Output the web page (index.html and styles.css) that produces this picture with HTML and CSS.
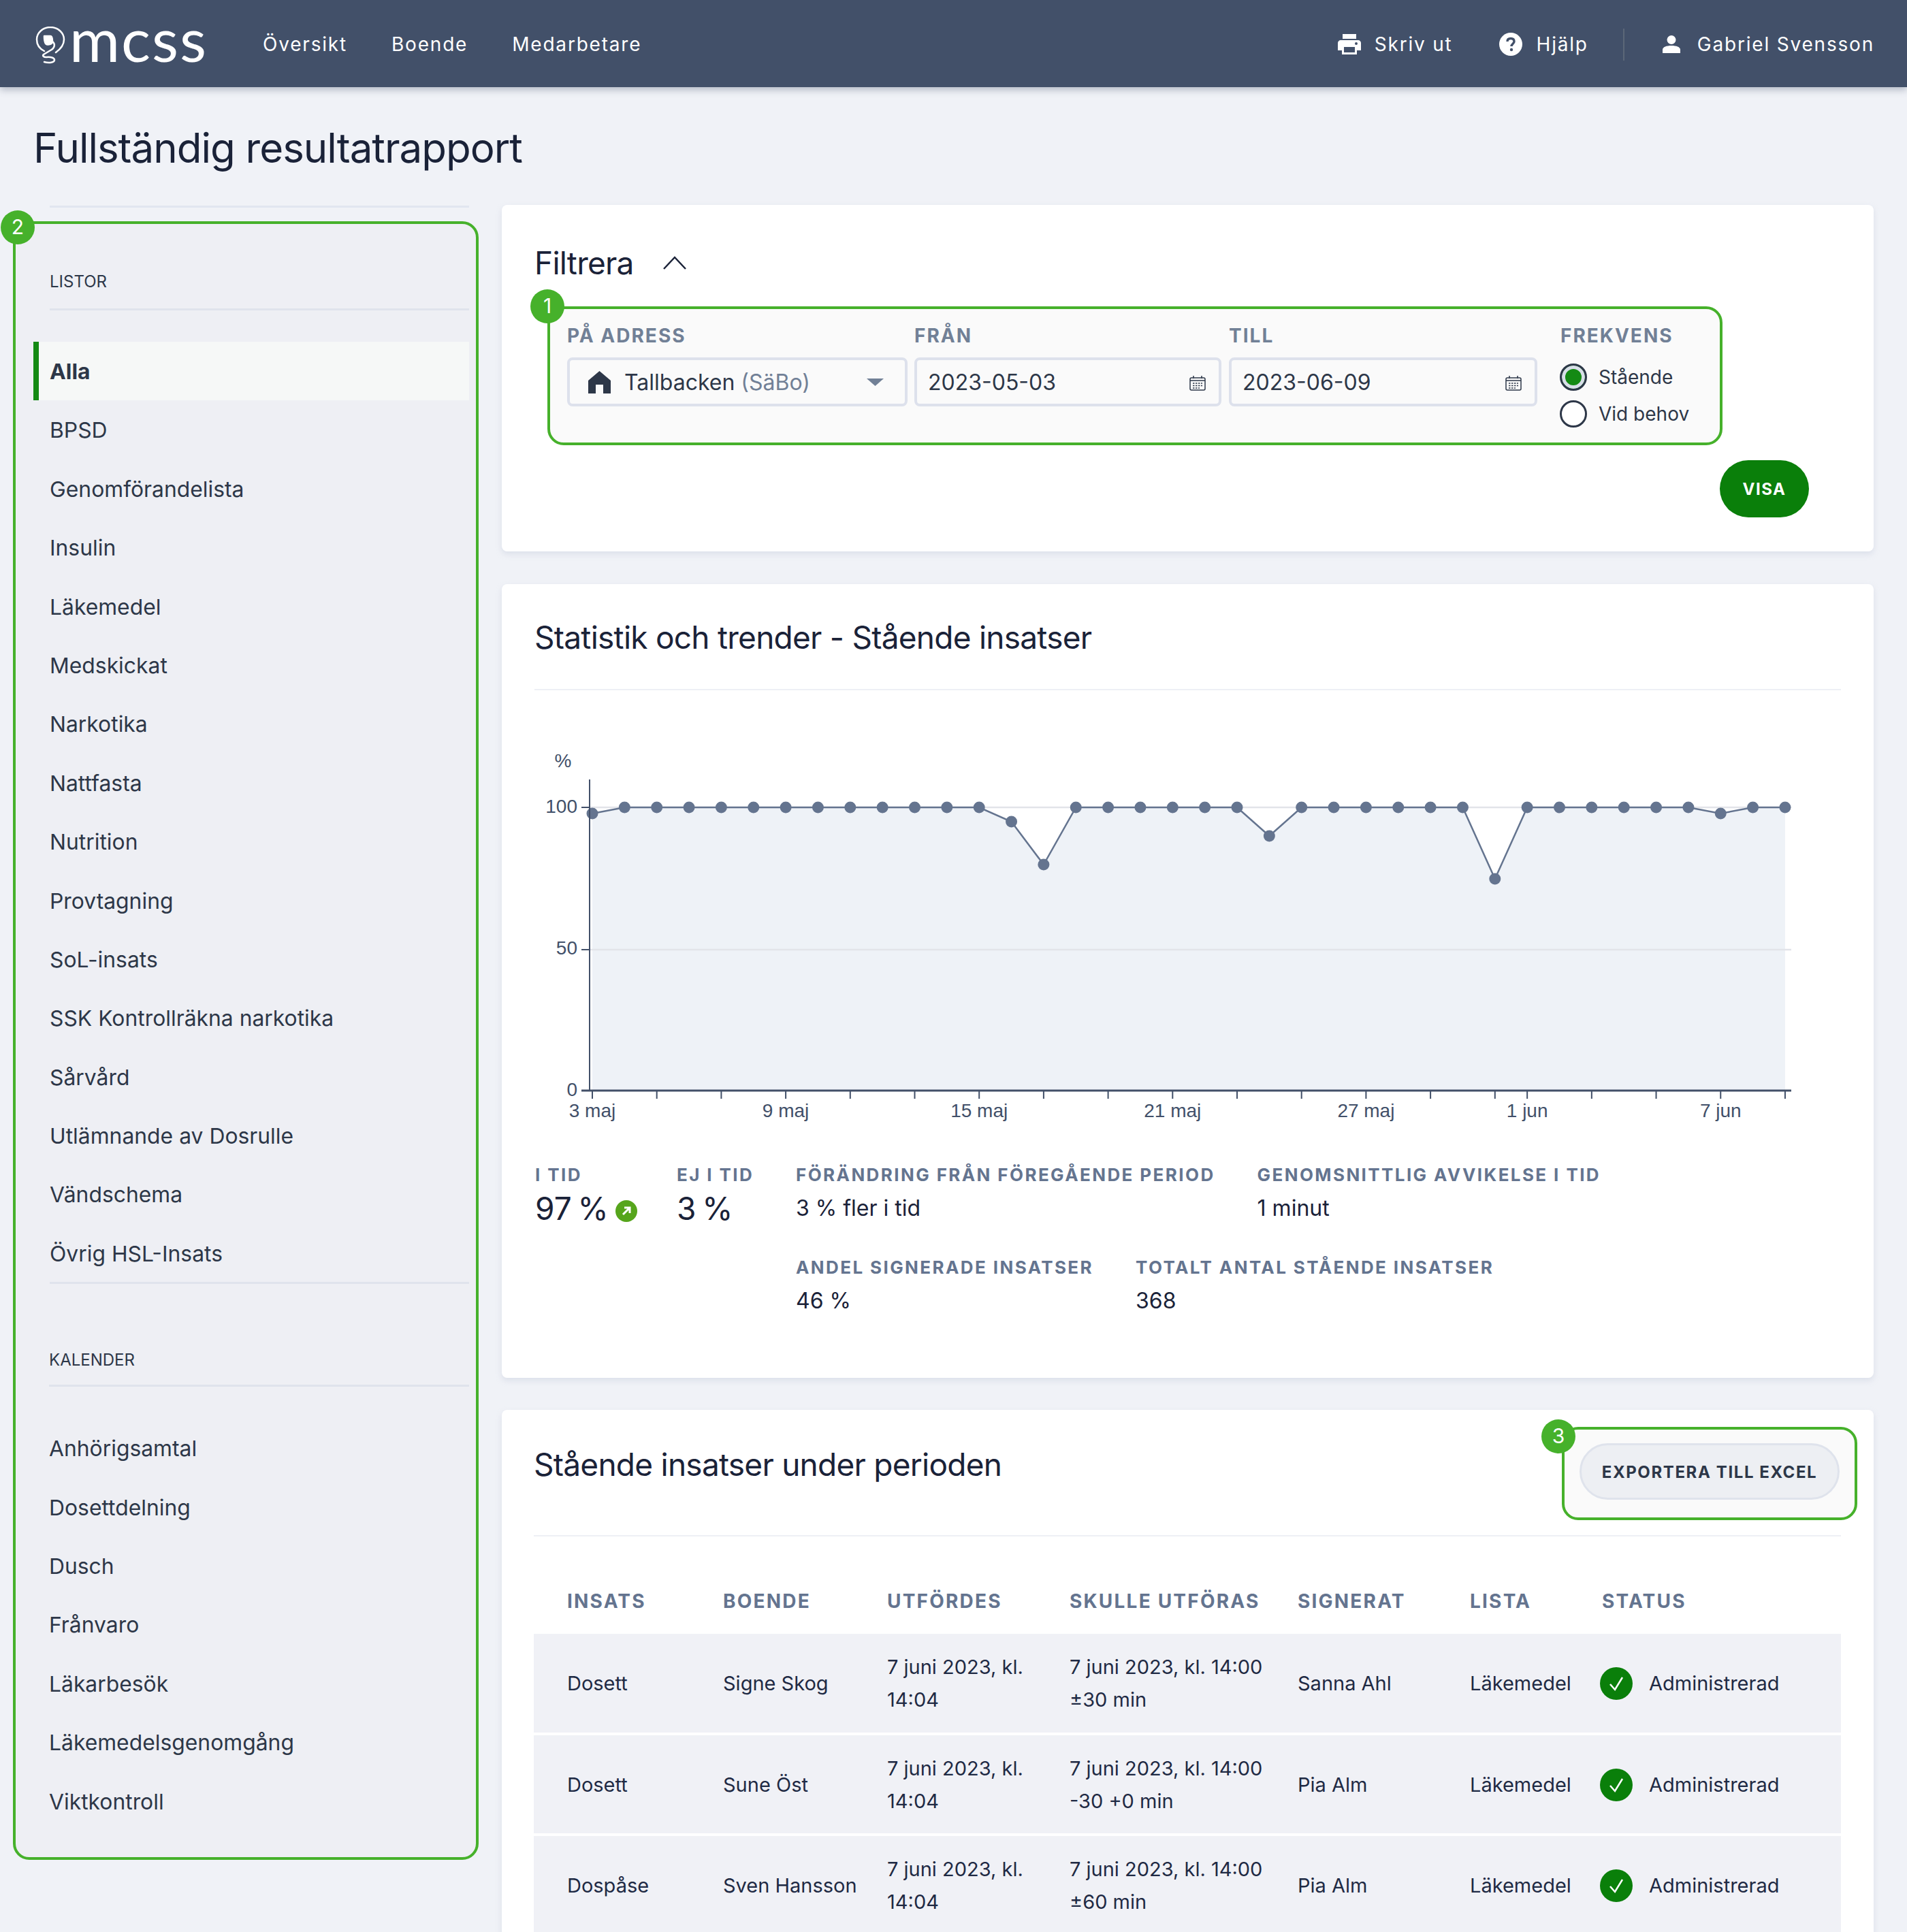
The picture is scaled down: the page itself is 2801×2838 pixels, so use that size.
FILE: index.html
```html
<!DOCTYPE html>
<html lang="sv">
<head>
<meta charset="utf-8">
<title>Fullständig resultatrapport</title>
<link rel="stylesheet" href="styles.css">
</head>
<body>
<div class="page">
  <header class="topbar">
    <a class="logo">
      <svg class="logo-mark" viewBox="0 0 44 56" fill="none" stroke="#fff" stroke-width="2.500" stroke-linecap="round" stroke-linejoin="round">
        <path d="M13 36C5 32 2 25 2 19C2 9 11 1 22 1C33 1 42 9 42 19C42 27 37 33 30 38"/>
        <path fill="#fff" d="M13 14H22C25 14 25 20 25 22C25 26 18 28 15 25C13 22 13 18 13 14Z"/>
        <path d="M25 22C30 26 28 32 22 35L12 41C10 43 12 45 16 45C22 44 28 46 28 49C28 53 20 54 13 52"/>
      </svg>
      <span class="logo-text">mcss</span>
    </a>
    <nav class="nav">
      <a>Översikt</a>
      <a>Boende</a>
      <a>Medarbetare</a>
    </nav>
    <div class="tools">
      <a class="tool tool-print">
        <svg class="ico-print" viewBox="0 0 34 30" fill="#fff"><path d="M7 0H27V7H7Z"/><path fill-rule="evenodd" d="M4 9H30C32 9 34 11 34 13V24H28V30H6V24H0V13C0 11 2 9 4 9ZM9 19V27H25V19ZM27 12a2 2 0 1 0 0 4a2 2 0 1 0 0-4Z"/></svg>
        Skriv ut
      </a>
      <a class="tool tool-help">
        <svg class="ico-help" viewBox="0 0 34 34"><circle cx="17" cy="17" r="17" fill="#fff"/><path d="M12 13C12 10 14 8.500 17 8.500C20 8.500 22 10 22 13C22 16 18 16.500 18 20" fill="none" stroke="#425069" stroke-width="3.400"/><circle cx="18" cy="25" r="2.200" fill="#425069"/></svg>
        Hjälp
      </a>
      <span class="divider"></span>
      <a class="tool tool-user">
        <svg class="ico-user" viewBox="0 0 26 26" fill="#fff"><circle cx="13" cy="6.500" r="6.500"/><path d="M0 26V21C0 17 6 15 13 15C20 15 26 17 26 21V26Z"/></svg>
        Gabriel Svensson
      </a>
    </div>
  </header>

  <h1 class="page-title">Fullständig resultatrapport</h1>

  <div class="layout">
    <aside class="aside">
      <div class="aside-rule"></div>
      <div class="callout callout-side">
        <span class="badge badge-2">2</span>
        <h2 class="side-head side-head-first">LISTOR</h2>
        <ul class="side-list side-list-first">
          <li class="active">Alla</li>
          <li>BPSD</li>
          <li>Genomförandelista</li>
          <li>Insulin</li>
          <li>Läkemedel</li>
          <li>Medskickat</li>
          <li>Narkotika</li>
          <li>Nattfasta</li>
          <li>Nutrition</li>
          <li>Provtagning</li>
          <li>SoL-insats</li>
          <li>SSK Kontrollräkna narkotika</li>
          <li>Sårvård</li>
          <li>Utlämnande av Dosrulle</li>
          <li>Vändschema</li>
          <li>Övrig HSL-Insats</li>
        </ul>
        <h2 class="side-head side-head-second">KALENDER</h2>
        <ul class="side-list side-list-second">
          <li>Anhörigsamtal</li>
          <li>Dosettdelning</li>
          <li>Dusch</li>
          <li>Frånvaro</li>
          <li>Läkarbesök</li>
          <li>Läkemedelsgenomgång</li>
          <li>Viktkontroll</li>
        </ul>
      </div>
    </aside>

    <main class="main">
      <section class="card card-filter">
        <div class="filter-head">
          <h2 class="card-title">Filtrera</h2>
          <svg class="chevron" viewBox="0 0 34 20" fill="none" stroke="#1a2238" stroke-width="2.500"><path d="M1 19L17 2L33 19"/></svg>
        </div>
        <div class="callout callout-filter">
          <span class="badge badge-1">1</span>
          <div class="field field-address">
            <label class="field-label">PÅ ADRESS</label>
            <div class="input">
              <svg class="ico-home" viewBox="0 0 33 33" fill="#2d3748"><path d="M16.500 0L33 14V33H22V20H11V33H0V14Z"/></svg>
              <span>Tallbacken <span class="muted">(SäBo)</span></span>
              <svg class="caret" viewBox="0 0 25 11" fill="#718096"><path d="M0 0H25L12.500 11Z"/></svg>
            </div>
          </div>
          <div class="field field-from">
            <label class="field-label">FRÅN</label>
            <div class="input input-date">
              <span>2023-05-03</span>
              <svg class="ico-cal" viewBox="0 0 24 22" fill="none" stroke="#2d3748" stroke-width="1.500"><rect x="1" y="3" width="22" height="18" rx="2"/><path d="M6 0V4M18 0V4M1 7H23"/><path d="M5 11H19M5 14.500H19M5 18H15" stroke-dasharray="2.500 1.500"/></svg>
            </div>
          </div>
          <div class="field field-to">
            <label class="field-label">TILL</label>
            <div class="input input-date">
              <span>2023-06-09</span>
              <svg class="ico-cal" viewBox="0 0 24 22" fill="none" stroke="#2d3748" stroke-width="1.500"><rect x="1" y="3" width="22" height="18" rx="2"/><path d="M6 0V4M18 0V4M1 7H23"/><path d="M5 11H19M5 14.500H19M5 18H15" stroke-dasharray="2.500 1.500"/></svg>
            </div>
          </div>
          <div class="field field-freq">
            <label class="field-label">FREKVENS</label>
            <div class="radio-row radio-row-first"><span class="radio radio-on"></span>Stående</div>
            <div class="radio-row"><span class="radio"></span>Vid behov</div>
          </div>
        </div>
        <div class="filter-actions"><button class="btn-primary">VISA</button></div>
      </section>

      <section class="card card-stats">
        <h2 class="card-title">Statistik och trender - Stående insatser</h2>
        <div class="rule rule-stats"></div>
        <svg class="chart" viewBox="785 1090 1922 570">
          <path class="area" d="M870 1195L917.350 1186L1438.200 1186L1485.550 1207L1532.900 1270L1580.250 1186L1817 1186L1864.350 1228L1911.700 1186L2148.450 1186L2195.800 1291L2243.150 1186L2479.900 1186L2527.250 1195L2574.600 1186L2621.950 1186L2621.950 1602L870 1602Z"/>
          <path class="grid" d="M866 1186H2631M866 1395H2631"/>
          <path class="line" d="M870 1195L917.350 1186L1438.200 1186L1485.550 1207L1532.900 1270L1580.250 1186L1817 1186L1864.350 1228L1911.700 1186L2148.450 1186L2195.800 1291L2243.150 1186L2479.900 1186L2527.250 1195L2574.600 1186L2621.950 1186"/>
          <g class="dots">
            <circle cx="870" cy="1195" r="8.500"/><circle cx="917.350" cy="1186" r="8.500"/><circle cx="964.700" cy="1186" r="8.500"/><circle cx="1012.050" cy="1186" r="8.500"/><circle cx="1059.400" cy="1186" r="8.500"/><circle cx="1106.750" cy="1186" r="8.500"/><circle cx="1154.100" cy="1186" r="8.500"/><circle cx="1201.450" cy="1186" r="8.500"/><circle cx="1248.800" cy="1186" r="8.500"/><circle cx="1296.150" cy="1186" r="8.500"/><circle cx="1343.500" cy="1186" r="8.500"/><circle cx="1390.850" cy="1186" r="8.500"/><circle cx="1438.200" cy="1186" r="8.500"/><circle cx="1485.550" cy="1207" r="8.500"/><circle cx="1532.900" cy="1270" r="8.500"/><circle cx="1580.250" cy="1186" r="8.500"/><circle cx="1627.600" cy="1186" r="8.500"/><circle cx="1674.950" cy="1186" r="8.500"/><circle cx="1722.300" cy="1186" r="8.500"/><circle cx="1769.650" cy="1186" r="8.500"/><circle cx="1817" cy="1186" r="8.500"/><circle cx="1864.350" cy="1228" r="8.500"/><circle cx="1911.700" cy="1186" r="8.500"/><circle cx="1959.050" cy="1186" r="8.500"/><circle cx="2006.400" cy="1186" r="8.500"/><circle cx="2053.750" cy="1186" r="8.500"/><circle cx="2101.100" cy="1186" r="8.500"/><circle cx="2148.450" cy="1186" r="8.500"/><circle cx="2195.800" cy="1291" r="8.500"/><circle cx="2243.150" cy="1186" r="8.500"/><circle cx="2290.500" cy="1186" r="8.500"/><circle cx="2337.850" cy="1186" r="8.500"/><circle cx="2385.200" cy="1186" r="8.500"/><circle cx="2432.550" cy="1186" r="8.500"/><circle cx="2479.900" cy="1186" r="8.500"/><circle cx="2527.250" cy="1195" r="8.500"/><circle cx="2574.600" cy="1186" r="8.500"/><circle cx="2621.950" cy="1186" r="8.500"/>
          </g>
          <path class="axis axis-y" d="M866 1145V1602"/>
          <path class="axis axis-x" d="M854 1602H2631"/>
          <path class="ticks" d="M854 1186H866M854 1395H866M870 1602v12M964.700 1602v12M1059.400 1602v12M1154.100 1602v12M1248.800 1602v12M1343.500 1602v12M1438.200 1602v12M1532.900 1602v12M1627.600 1602v12M1722.300 1602v12M1817 1602v12M1911.700 1602v12M2006.400 1602v12M2101.100 1602v12M2195.800 1602v12M2243.150 1602v12M2337.850 1602v12M2432.550 1602v12M2527.250 1602v12M2621.950 1602v12"/>
          <g class="chart-text">
            <text x="827" y="1127" text-anchor="middle">%</text>
            <text x="848" y="1194" text-anchor="end">100</text>
            <text x="848" y="1402" text-anchor="end">50</text>
            <text x="848" y="1610" text-anchor="end">0</text>
            <text x="870" y="1641" text-anchor="middle">3 maj</text>
            <text x="1154.100" y="1641" text-anchor="middle">9 maj</text>
            <text x="1438.200" y="1641" text-anchor="middle">15 maj</text>
            <text x="1722.300" y="1641" text-anchor="middle">21 maj</text>
            <text x="2006.400" y="1641" text-anchor="middle">27 maj</text>
            <text x="2243.150" y="1641" text-anchor="middle">1 jun</text>
            <text x="2527.250" y="1641" text-anchor="middle">7 jun</text>
          </g>
        </svg>
        <div class="stats">
          <div class="stat stat-on">
            <div class="stat-label">I TID</div>
            <div class="stat-big">97 %<svg class="ico-trend" viewBox="0 0 32 32"><circle cx="16" cy="16" r="16" fill="#56a51c"/><path d="M11 21L21 11M13 11H21V19" fill="none" stroke="#fff" stroke-width="3"/></svg></div>
          </div>
          <div class="stat stat-off">
            <div class="stat-label">EJ I TID</div>
            <div class="stat-big">3 %</div>
          </div>
          <div class="stat-group">
            <div class="stat-row">
              <div class="stat"><div class="stat-label">FÖRÄNDRING FRÅN FÖREGÅENDE PERIOD</div><div class="stat-value">3 % fler i tid</div></div>
              <div class="stat"><div class="stat-label">GENOMSNITTLIG AVVIKELSE I TID</div><div class="stat-value">1 minut</div></div>
            </div>
            <div class="stat-row">
              <div class="stat"><div class="stat-label">ANDEL SIGNERADE INSATSER</div><div class="stat-value">46 %</div></div>
              <div class="stat"><div class="stat-label">TOTALT ANTAL STÅENDE INSATSER</div><div class="stat-value">368</div></div>
            </div>
          </div>
        </div>
      </section>

      <section class="card card-table">
        <div class="table-head">
          <h2 class="card-title">Stående insatser under perioden</h2>
          <div class="callout callout-export">
            <span class="badge badge-3">3</span>
            <button class="btn-export">EXPORTERA TILL EXCEL</button>
          </div>
        </div>
        <div class="rule"></div>
        <div class="tbl">
          <div class="tr th">
            <div>INSATS</div><div>BOENDE</div><div>UTFÖRDES</div><div>SKULLE UTFÖRAS</div><div>SIGNERAT</div><div>LISTA</div><div>STATUS</div>
          </div>
          <div class="tr td">
            <div>Dosett</div><div>Signe Skog</div><div>7 juni 2023, kl.<br>14:04</div><div>7 juni 2023, kl. 14:00<br>±30 min</div><div>Sanna Ahl</div><div>Läkemedel</div>
            <div class="status"><svg class="ico-check" viewBox="0 0 48 48"><circle cx="24" cy="24" r="24" fill="#0a7f0a"/><path d="M15 25L22 33L33 15" fill="none" stroke="#fff" stroke-width="2.500"/></svg>Administrerad</div>
          </div>
          <div class="tr td">
            <div>Dosett</div><div>Sune Öst</div><div>7 juni 2023, kl.<br>14:04</div><div>7 juni 2023, kl. 14:00<br>-30 +0 min</div><div>Pia Alm</div><div>Läkemedel</div>
            <div class="status"><svg class="ico-check" viewBox="0 0 48 48"><circle cx="24" cy="24" r="24" fill="#0a7f0a"/><path d="M15 25L22 33L33 15" fill="none" stroke="#fff" stroke-width="2.500"/></svg>Administrerad</div>
          </div>
          <div class="tr td">
            <div>Dospåse</div><div>Sven Hansson</div><div>7 juni 2023, kl.<br>14:04</div><div>7 juni 2023, kl. 14:00<br>±60 min</div><div>Pia Alm</div><div>Läkemedel</div>
            <div class="status"><svg class="ico-check" viewBox="0 0 48 48"><circle cx="24" cy="24" r="24" fill="#0a7f0a"/><path d="M15 25L22 33L33 15" fill="none" stroke="#fff" stroke-width="2.500"/></svg>Administrerad</div>
          </div>
        </div>
      </section>
    </main>
  </div>
</div>
</body>
</html>
```
FILE: styles.css
```css
* { box-sizing: border-box; }
html, body { margin: 0; padding: 0; }
body { font-family: Inter, "Liberation Sans", sans-serif; color: #1a2238; background: #f0f2f7; }
.page { height: 2838px; overflow: hidden; background: #f0f2f7; }
h1, h2, ul { margin: 0; padding: 0; font-weight: 400; }
ul { list-style: none; }
button { font-family: inherit; cursor: pointer; }

.topbar { display: flex; align-items: center; height: 128px; background: #425069; color: #fff; padding: 2px 48px 0 52px; box-shadow: 0 4px 10px rgba(66, 80, 105, .35); position: relative; }
.logo { display: flex; align-items: center; width: 334px; }
.logo-mark { width: 44px; height: 56px; margin-top: 3px; }
.logo-text { font-family: Lato, sans-serif; font-weight: 400; font-size: 90px; line-height: 108px; letter-spacing: 2px; margin: -18px 0 0 6px; }
.nav { display: flex; gap: 65px; font-size: 28px; letter-spacing: 1.800px; }
.tools { display: flex; align-items: center; margin-left: auto; font-size: 28px; letter-spacing: 1.800px; }
.tool { display: flex; align-items: center; }
.ico-print { width: 34px; height: 30px; margin-right: 20px; }
.ico-help { width: 34px; height: 34px; margin: 0 21px 0 68px; }
.ico-user { width: 26px; height: 26px; margin-right: 25px; }
.divider { width: 2px; height: 47px; background: #5c6778; margin: 0 56px 0 51px; }

.page-title { font-size: 60px; line-height: 80px; font-weight: 400; letter-spacing: -1px; padding: 49px 0 0 49px; height: 173px; color: #1a2238; }

.layout { display: flex; }
.aside { width: 737px; flex: none; padding-left: 19px; }
.aside-rule { height: 3px; background: #e1e6f0; margin: 1px 48px 20px 54px; }
.callout { position: relative; border: 4px solid #46b12b; border-radius: 24px; background: #fafafa; }
.badge { position: absolute; width: 50px; height: 50px; border-radius: 50%; background: #46b12b; color: #fff; font-size: 30px; line-height: 48px; text-align: center; }
.callout-side { width: 684px; height: 2407px; background: #eeeff4; padding: 0 10px 0 26px; }
.badge-2 { left: -22px; top: -20px; }
.side-head { font-size: 24px; line-height: 34px; color: #2d3748; padding: 68px 0 0 24px; }
.side-head-first { height: 124px; }
.side-head-first::after, .side-head-second::after { content: ""; display: block; height: 3px; background: #dfe3ec; margin: 22px 0 0 0; }
.side-list { font-size: 31.850px; color: #2d3748; }
.side-list li { height: 86.400px; line-height: 88px; padding-left: 24px; }
.side-list-first { margin-top: 49px; }
.side-list-first::after { content: ""; display: block; height: 3px; background: #dfe3ec; margin: -1px 0 0 24px; }
.side-list li.active { background: #f6f8f7; border-left: 8px solid #148a14; padding-left: 16px; font-weight: 700; }
.side-head-second { height: 150px; padding: 95px 0 0 23px; }
.side-head-second::after { margin-top: 19px; }
.side-list-second { margin: 48px 0 0 0; }
.side-list-second li { padding-left: 23px; }

.main { width: 2015px; flex: none; }
.card { background: #fff; border-radius: 8px; padding: 0 48px; box-shadow: 0 4px 8px rgba(180, 188, 208, .35); }
.card-title { font-size: 46px; line-height: 50px; letter-spacing: -.75px; color: #1a2238; }
.card-filter { height: 509px; padding-top: 60px; margin-bottom: 48px; }
.filter-head { display: flex; align-items: center; gap: 43px; }
.chevron { width: 34px; height: 20px; }
.callout-filter { display: flex; width: 1726px; height: 204px; margin: 39px 0 0 19px; padding: 19px 0 0 25px; }
.badge-1 { left: -29px; top: -29px; }
.field-label { display: block; font-size: 28px; line-height: 40px; font-weight: 700; letter-spacing: 2px; color: #718096; }
.field-address { width: 510px; }
.field-from { width: 462px; }
.field-to { width: 487px; }
.input { display: flex; align-items: center; height: 72px; margin-top: 12px; border: 4px solid #dde1ec; border-radius: 8px; background: #fafafa; font-size: 32px; color: #2d3748; padding: 0 0 0 27px; }
.field-address .input { width: 500px; }
.field-from .input { width: 451px; }
.field-to .input { width: 453px; }
.input-date { justify-content: space-between; padding: 0 19px 0 16px; }
.muted { color: #718096; }
.ico-home { width: 33px; height: 33px; margin-right: 20px; }
.caret { width: 25px; height: 11px; margin-left: auto; margin-right: 31px; }
.ico-cal { width: 24px; height: 22px; margin-top: 4px; }
.radio-row { display: flex; align-items: center; height: 40px; font-size: 28px; color: #2d3748; margin-top: 14px; }
.radio-row-first { margin-top: 21px; }
.radio { width: 40px; height: 40px; flex: none; border: 3px solid #2d3748; border-radius: 50%; background: #fff; margin: 0 17px 0 -1px; }
.radio-on { background: #148a14; box-shadow: inset 0 0 0 5px #d8dee8; }
.filter-actions { display: flex; justify-content: flex-end; margin: 22px 47px 0 0; }
.btn-primary { width: 131px; height: 84px; border: 0; border-radius: 42px; background: #0a7f0a; color: #fff; font-size: 24px; font-weight: 700; letter-spacing: 1.500px; }

.card-stats { height: 1166px; padding-top: 53px; margin-bottom: 47px; }
.rule { height: 2px; background: #eef0f5; }
.rule-stats { margin-top: 51px; }
.chart { display: block; width: 1922px; height: 570px; margin-top: 76px; }
.area { fill: #eef2f7; }
.grid { fill: none; stroke: #e2e4e9; stroke-width: 2.500; }
.line { fill: none; stroke: #64748f; stroke-width: 2.500; }
.dots { fill: #64748f; }
.axis, .ticks { fill: none; stroke: #425069; }
.axis-x { stroke-width: 3; }
.axis-y, .ticks { stroke-width: 2; }
.chart-text { font-family: "Liberation Sans", sans-serif; font-size: 28px; fill: #425069; }
.stats { display: flex; margin-top: 48px; padding-left: 1px; }
.stat-on { width: 208px; }
.stat-off { width: 175px; }
.stat-label { font-size: 26px; line-height: 36px; font-weight: 700; letter-spacing: 2.400px; color: #64748f; white-space: nowrap; }
.stat-big { display: flex; align-items: center; font-size: 46px; line-height: 62px; word-spacing: -4px; color: #1a2238; }
.ico-trend { width: 32px; height: 32px; margin: 8px 0 0 10px; }
.stat-value { font-size: 32px; line-height: 62px; color: #1a2238; }
.stat-row { display: flex; gap: 62px; margin-bottom: 38px; }

.card-table { height: 800px; }
.table-head { display: flex; justify-content: space-between; align-items: flex-start; padding-top: 25px; margin-right: -24px; }
.table-head .card-title { margin: 30px 0 0 -1px; }
.callout-export { width: 434px; height: 137px; padding: 20px 0 0 22px; }
.badge-3 { left: -34px; top: -15px; }
.btn-export { width: 382px; height: 83px; border: 3px solid #dfe3ec; border-radius: 42px; background: #edeff3; color: #2d3748; font-size: 24px; font-weight: 700; letter-spacing: 1.600px; padding: 2px 0 0 0; }
.card-table > .rule { margin-top: 22px; margin-left: -1px; }
.tbl { margin: 45px 0 0 -1px; width: 1920px; }
.tr { display: grid; grid-template-columns: 229px 241px 268px 335px 253px 194px 1fr; padding: 2px 0 0 49px; align-items: center; }
.th { height: 98px; font-size: 28px; font-weight: 700; letter-spacing: 2.200px; color: #64748f; }
.td { height: 144.500px; margin-bottom: 4px; background: #f0f1f6; font-size: 29px; line-height: 48px; color: #1f2a44; }
.status { display: flex; align-items: center; margin: 0 0 0 -3px; }
.ico-check { width: 48px; height: 48px; margin-right: 24px; }
```
